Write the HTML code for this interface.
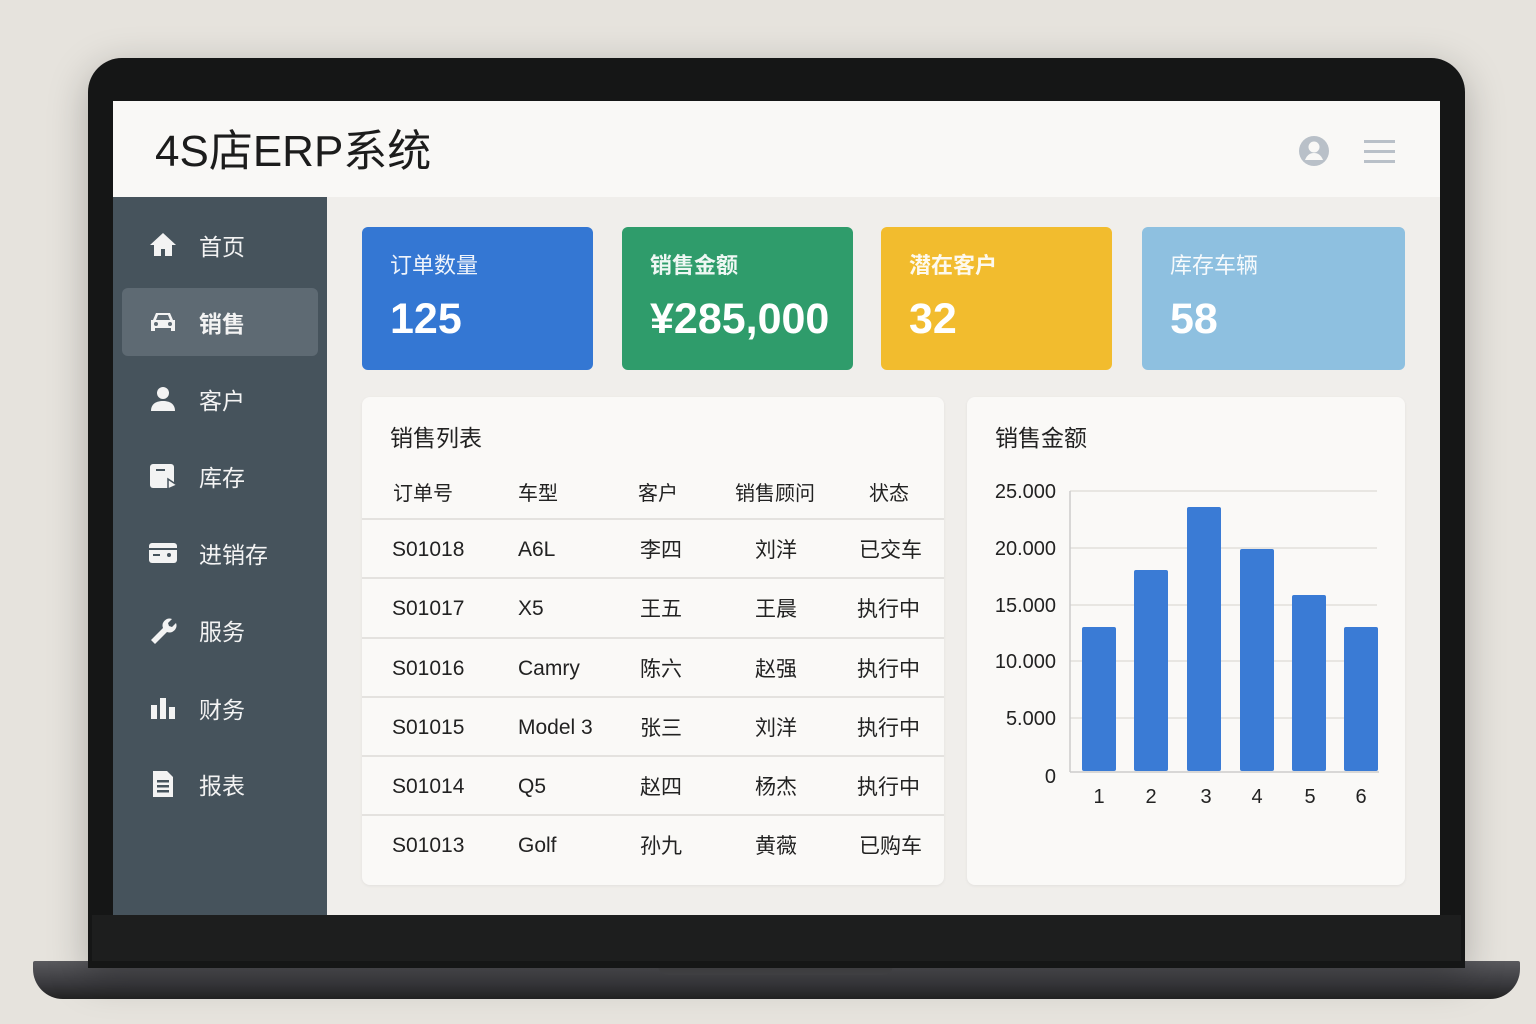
<!DOCTYPE html>
<html><head><meta charset="utf-8"><style>
*{margin:0;padding:0;box-sizing:border-box}
body{width:1536px;height:1024px;background:#e6e3dd;position:relative;overflow:hidden;font-family:"Liberation Sans","Noto Sans CJK SC",sans-serif}
.abs{position:absolute}
.bezel{left:88px;top:58px;width:1377px;height:910px;background:#151616;border-radius:34px 34px 0 0;box-shadow:0 10px 40px rgba(0,0,0,.25)}
.screen{left:113px;top:101px;width:1327px;height:814px;background:#f0eeeb;overflow:hidden}
.hdr{left:0;top:0;width:1327px;height:96px;background:#f9f8f6}
.side{left:0;top:96px;width:214px;height:718px;background:#46535c}
.nav{position:absolute;left:35px;color:#f3f3f3;font-size:23px;display:flex;align-items:center}
.nav svg{width:30px;height:30px;margin-right:21px}
.card{position:absolute;top:126px;height:143px;border-radius:6px;color:#fff}
.card .t{position:absolute;left:28px;top:21px;font-size:22px;opacity:.92}
.card .v{position:absolute;left:28px;top:68px;font-size:43px;font-weight:bold}
.panel{position:absolute;top:296px;height:488px;background:#faf9f7;border-radius:8px;box-shadow:0 1px 3px rgba(0,0,0,.06)}
.row{position:absolute;left:0;width:582px;height:59px;border-top:2px solid #e4e2df;font-size:21px;color:#222}
.row span{position:absolute;top:14px}
.row span.l{top:18px}
</style></head><body>
<div class="abs" style="left:33px;top:961px;width:1487px;height:38px;background:linear-gradient(#5a5a5e,#3a3a3e 60%,#222);border-radius:2px 2px 30px 30px"></div>
<div class="abs" style="left:658px;top:961px;width:235px;height:14px;background:#4a4a4d;border-radius:0 0 10px 10px"></div>
<div class="abs bezel"></div>
<div class="abs" style="left:92px;top:915px;width:1369px;height:46px;background:#1d1e1e"></div>
<div class="abs screen">
 <div class="abs hdr">
  <div class="abs" style="left:42px;top:23px;font-size:44px;line-height:56px;color:#1c1c1c">4S店ERP系统</div>
  <svg class="abs" style="left:1185px;top:34px" width="32" height="32" viewBox="0 0 32 32"><circle cx="16" cy="16" r="15" fill="#b9c0c8"/><circle cx="16" cy="12" r="5.5" fill="#f9f8f6"/><path d="M7 25c2-5 5-7 9-7s7 2 9 7" fill="#f9f8f6"/></svg>
  <div class="abs" style="left:1251px;top:39px;width:31px;height:3px;background:#b9c0c8;box-shadow:0 10px 0 #b9c0c8,0 20px 0 #b9c0c8"></div>
 </div>
 <div class="abs side">
  <div class="abs" style="left:9px;top:91px;width:196px;height:68px;background:#5e6a73;border-radius:6px"></div>
  <div class="nav" style="top:31px"><svg viewBox="0 0 30 30"><path d="M15 3 2 15h4v11h7v-7h4v7h7V15h4z" fill="#f3f3f3"/></svg>首页</div>
  <div class="nav" style="top:108px"><svg viewBox="0 0 30 30"><path d="M5 13l3-7h14l3 7h2v11h-4v-3H7v3H3V13z" fill="#f3f3f3"/><circle cx="8" cy="17" r="2" fill="#5e6a73"/><circle cx="22" cy="17" r="2" fill="#5e6a73"/><path d="M8 13l2-5h10l2 5z" fill="#5e6a73"/></svg><b>销售</b></div>
  <div class="nav" style="top:185px"><svg viewBox="0 0 30 30"><circle cx="15" cy="9" r="6" fill="#f3f3f3"/><path d="M3 27c0-7 5-10 12-10s12 3 12 10z" fill="#f3f3f3"/></svg>客户</div>
  <div class="nav" style="top:262px"><svg viewBox="0 0 30 30"><rect x="2" y="3" width="24" height="24" rx="3" fill="#f3f3f3"/><rect x="8" y="8" width="9" height="2" fill="#46535c"/><path d="M20 18l9 6-9 4z" fill="#f3f3f3" stroke="#46535c" stroke-width="1.5"/></svg>库存</div>
  <div class="nav" style="top:339px"><svg viewBox="0 0 30 30"><rect x="1" y="5" width="28" height="20" rx="3" fill="#f3f3f3"/><rect x="5" y="16" width="7" height="2" fill="#46535c"/><circle cx="21" cy="17" r="2" fill="#46535c"/><rect x="1" y="10" width="28" height="2" fill="#46535c"/></svg>进销存</div>
  <div class="nav" style="top:416px"><svg viewBox="0 0 30 30"><path d="M3 25l12-12a7 7 0 0 1 9-9l-4 4 1 3 3 1 4-4a7 7 0 0 1-9 9L7 29z" fill="#f3f3f3"/></svg>服务</div>
  <div class="nav" style="top:494px"><svg viewBox="0 0 30 30"><rect x="3" y="12" width="6" height="14" fill="#f3f3f3"/><rect x="12" y="5" width="6" height="21" fill="#f3f3f3"/><rect x="21" y="14" width="6" height="12" fill="#f3f3f3"/></svg>财务</div>
  <div class="nav" style="top:570px"><svg viewBox="0 0 30 30"><path d="M5 2h14l6 6v20H5z" fill="#f3f3f3"/><rect x="9" y="11" width="12" height="2.5" fill="#46535c"/><rect x="9" y="16" width="12" height="2.5" fill="#46535c"/><rect x="9" y="21" width="12" height="2.5" fill="#46535c"/></svg>报表</div>
 </div>
 <div class="card" style="left:249px;width:231px;background:#3477d3"><div class="t">订单数量</div><div class="v">125</div></div>
 <div class="card" style="left:509px;width:231px;background:#2f9c6b"><div class="t"><b>销售金额</b></div><div class="v">¥285,000</div></div>
 <div class="card" style="left:768px;width:231px;background:#f2bc2e"><div class="t"><b>潜在客户</b></div><div class="v">32</div></div>
 <div class="card" style="left:1029px;width:263px;background:#8ec0e0"><div class="t">库存车辆</div><div class="v">58</div></div>
 <div class="panel" style="left:249px;width:582px">
  <div class="abs" style="left:28px;top:22px;font-size:23px;color:#222">销售列表</div>
  <div class="row" style="top:66px;border:none;font-size:20px"><span style="left:31px">订单号</span><span style="left:156px">车型</span><span style="left:276px">客户</span><span style="left:373px">销售顾问</span><span style="left:507px">状态</span></div>
  <div class="row" style="top:121px"><span class="l" style="left:30px">S01018</span><span class="l" style="left:156px">A6L</span><span style="left:278px">李四</span><span style="left:393px">刘洋</span><span style="left:497px">已交车</span></div>
  <div class="row" style="top:180px"><span class="l" style="left:30px">S01017</span><span class="l" style="left:156px">X5</span><span style="left:278px">王五</span><span style="left:393px">王晨</span><span style="left:495px">执行中</span></div>
  <div class="row" style="top:240px"><span class="l" style="left:30px">S01016</span><span class="l" style="left:156px">Camry</span><span style="left:278px">陈六</span><span style="left:393px">赵强</span><span style="left:495px">执行中</span></div>
  <div class="row" style="top:299px"><span class="l" style="left:30px">S01015</span><span class="l" style="left:156px">Model 3</span><span style="left:278px">张三</span><span style="left:393px">刘洋</span><span style="left:495px">执行中</span></div>
  <div class="row" style="top:358px"><span class="l" style="left:30px">S01014</span><span class="l" style="left:156px">Q5</span><span style="left:278px">赵四</span><span style="left:393px">杨杰</span><span style="left:495px">执行中</span></div>
  <div class="row" style="top:417px"><span class="l" style="left:30px">S01013</span><span class="l" style="left:156px">Golf</span><span style="left:278px">孙九</span><span style="left:393px">黄薇</span><span style="left:497px">已购车</span></div>
 </div>
 <div class="panel" style="left:854px;width:438px">
  <div class="abs" style="left:28px;top:22px;font-size:23px;color:#222">销售金额</div>
 </div>
 <svg class="abs" style="left:854px;top:296px" width="438" height="488" font-family="Liberation Sans" font-size="20" fill="#222">
  <g stroke="#e2e0dc" stroke-width="1.5"><line x1="103" x2="410" y1="94" y2="94"/><line x1="103" x2="410" y1="151" y2="151"/><line x1="103" x2="410" y1="208" y2="208"/><line x1="103" x2="410" y1="264" y2="264"/><line x1="103" x2="410" y1="321" y2="321"/></g>
  <line x1="103" x2="103" y1="94" y2="375" stroke="#ccc" stroke-width="1.5"/>
  <line x1="103" x2="412" y1="375" y2="375" stroke="#ccc" stroke-width="1.5"/>
  <g text-anchor="end"><text x="89" y="101">25.000</text><text x="89" y="158">20.000</text><text x="89" y="215">15.000</text><text x="89" y="271">10.000</text><text x="89" y="328">5.000</text><text x="89" y="386">0</text></g>
  <g fill="#3a7bd5"><rect x="115" y="230" width="34" height="144" rx="2"/><rect x="167" y="173" width="34" height="201" rx="2"/><rect x="220" y="110" width="34" height="264" rx="2"/><rect x="273" y="152" width="34" height="222" rx="2"/><rect x="325" y="198" width="34" height="176" rx="2"/><rect x="377" y="230" width="34" height="144" rx="2"/></g>
  <g text-anchor="middle"><text x="132" y="406">1</text><text x="184" y="406">2</text><text x="239" y="406">3</text><text x="290" y="406">4</text><text x="343" y="406">5</text><text x="394" y="406">6</text></g>
 </svg>
</div>
</body></html>
